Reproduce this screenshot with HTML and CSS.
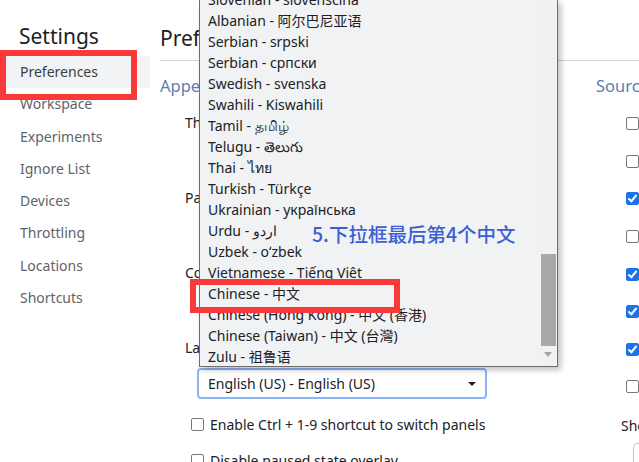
FILE: index.html
```html
<!DOCTYPE html>
<html>
<head>
    <title>Settings</title>
    <link rel="stylesheet" href="styles.css">
</head>
<body>
    <div class="settings">
        <div class="sidebar">
            <h1 class="sidebar-title">Settings</h1>
            <div class="nav-item active">Preferences</div>
            <div class="nav-item">Workspace</div>
            <div class="nav-item">Experiments</div>
            <div class="nav-item">Ignore List</div>
            <div class="nav-item">Devices</div>
            <div class="nav-item">Throttling</div>
            <div class="nav-item">Locations</div>
            <div class="nav-item">Shortcuts</div>
        </div>

        <div class="main">
            <h2 class="main-title">Preferences</h2>
            <div class="columns">
                <div class="col col-left">
                    <h3 class="section-title">Appearance</h3>

                    <div class="field">
                        <div class="field-label">Theme:</div>
                        <div class="select">System preference <span class="caret"></span></div>
                    </div>
                    <div class="field">
                        <div class="field-label">Panel layout:</div>
                        <div class="select">auto <span class="caret"></span></div>
                    </div>
                    <div class="field">
                        <div class="field-label">Color format:</div>
                        <div class="select">As authored <span class="caret"></span></div>
                    </div>
                    <div class="field">
                        <div class="field-label">Language:</div>
                        <div class="select focused">English (US) - English (US) <span class="caret"></span></div>
                    </div>

                    <div class="check-row"><span class="box"></span>Enable Ctrl + 1-9 shortcut to switch panels</div>
                    <div class="check-row"><span class="box"></span>Disable paused state overlay</div>
                </div>

                <div class="col col-right">
                    <h3 class="section-title">Sources</h3>
                    <div class="right-row"><span class="box"></span>Search in anonymous and content scripts</div>
                    <div class="right-row"><span class="box"></span>Automatically reveal files in sidebar</div>
                    <div class="right-row"><span class="box checked"></span>Enable JavaScript source maps</div>
                    <div class="right-row"><span class="box"></span>Enable tab moves focus</div>
                    <div class="right-row"><span class="box checked"></span>Detect indentation</div>
                    <div class="right-row"><span class="box checked"></span>Autocompletion</div>
                    <div class="right-row"><span class="box checked"></span>Bracket matching</div>
                    <div class="right-row"><span class="box"></span>Code folding</div>
                    <div class="right-label">Show whitespace characters:</div>
                    <div class="right-select"></div>
                </div>
            </div>
        </div>
    </div>

    <!-- open language dropdown -->
    <div class="dropdown">
        <div class="options">
            <div class="option">Slovenian - slovenščina</div>
            <div class="option">Albanian - 阿尔巴尼亚语</div>
            <div class="option">Serbian - srpski</div>
            <div class="option">Serbian - српски</div>
            <div class="option">Swedish - svenska</div>
            <div class="option">Swahili - Kiswahili</div>
            <div class="option">Tamil - தமிழ்</div>
            <div class="option">Telugu - తెలుగు</div>
            <div class="option">Thai - ไทย</div>
            <div class="option">Turkish - Türkçe</div>
            <div class="option">Ukrainian - українська</div>
            <div class="option">Urdu - اردو</div>
            <div class="option">Uzbek - oʻzbek</div>
            <div class="option">Vietnamese - Tiếng Việt</div>
            <div class="option">Chinese - 中文</div>
            <div class="option">Chinese (Hong Kong) - 中文 (香港)</div>
            <div class="option">Chinese (Taiwan) - 中文 (台灣)</div>
            <div class="option">Zulu - 祖鲁语</div>
        </div>
        <div class="scrollbar">
            <div class="thumb"></div>
            <div class="arrow-down"></div>
        </div>
        <div class="note">5.下拉框最后第4个中文</div>
    </div>

    <div class="mark mark-nav"></div>
    <div class="mark mark-option"></div>
</body>
</html>
```

FILE: styles.css
```css
body {
    margin: 0;
    font-family: "Noto Sans", "Noto Sans CJK SC", sans-serif;
    font-size: 14px;
    color: #202124;
    background: white;
    overflow: hidden;
}
.settings {
    display: flex;
    height: 462px;
    overflow: hidden;
}
.sidebar {
    width: 150px;
    flex-shrink: 0;
}
.sidebar-title {
    margin: 23px 0 7px 19px;
    font-size: 21px;
    font-weight: normal;
    line-height: 26px;
}
.nav-item {
    height: 32.3px;
    line-height: 32.3px;
    padding-left: 20px;
    color: #5f6368;
}
.nav-item.active {
    background: #f1f3f4;
    color: #3c4043;
}
.main {
    flex: 1;
    padding-left: 10px;
    min-width: 0;
}
.main-title {
    margin: 0;
    height: 61px;
    line-height: 76px;
    font-size: 21px;
    font-weight: normal;
    border-bottom: 1px solid #d3d3d3;
    box-sizing: border-box;
}
.columns {
    display: flex;
}
.col-left {
    width: 436px;
    flex-shrink: 0;
}
.col-right {
    flex: 1;
    white-space: nowrap;
}
.section-title {
    margin: 14px 0 0;
    font-size: 16.5px;
    font-weight: normal;
    line-height: 22px;
    color: #5e7eb0;
}
.field {
    padding-left: 25px;
    margin-top: 16px;
}
.field + .field {
    margin-top: 14px;
}
.field-label {
    line-height: 20px;
}
.select {
    position: relative;
    margin: 10px 0 0 15px;
    width: 287px;
    height: 31px;
    line-height: 29px;
    box-sizing: border-box;
    padding-left: 9px;
    border: 1px solid #c4c7c5;
    border-radius: 4px;
}
.select.focused {
    margin-left: 12px;
    width: 290px;
    border: 2px solid #8ab4f8;
    line-height: 27px;
}
.caret {
    position: absolute;
    right: 9px;
    top: 12px;
    border-left: 4px solid transparent;
    border-right: 4px solid transparent;
    border-top: 4px solid #202124;
}
.check-row {
    display: flex;
    align-items: center;
    height: 20px;
    margin-top: 15px;
    padding-left: 31px;
}
.check-row + .check-row {
    margin-top: 16px;
}
.box {
    width: 11px;
    height: 11px;
    border: 1px solid #767676;
    border-radius: 2px;
    margin-right: 6px;
    flex-shrink: 0;
    position: relative;
}
.box.checked {
    background: #1a73e8;
    border-color: #1a73e8;
}
.box.checked::after {
    content: "";
    position: absolute;
    left: 3px;
    top: 0px;
    width: 3px;
    height: 7px;
    border-right: 2px solid white;
    border-bottom: 2px solid white;
    transform: rotate(40deg);
}
.right-row {
    display: flex;
    align-items: center;
    height: 37.6px;
    padding-left: 30px;
}
.col-right .section-title + .right-row {
    margin-top: 8px;
}
.right-label {
    padding-left: 25px;
    line-height: 20px;
    margin-top: 10px;
}
.right-select {
    margin: 7px 0 0 37px;
    width: 200px;
    height: 30px;
    border: 1px solid #c4c7c5;
    border-radius: 4px;
}

/* open dropdown */
.dropdown {
    position: absolute;
    left: 199px;
    top: 0;
    width: 357px;
    height: 366px;
    background: #f1f2f4;
    border: 1px solid #6e6e6e;
    border-top: none;
    box-shadow: 3px 3px 6px rgba(0,0,0,0.25);
    overflow: hidden;
    display: flex;
}
.options {
    flex: 1;
    margin-top: -11px;
}
.option {
    height: 21px;
    line-height: 21px;
    padding-left: 8px;
    white-space: nowrap;
    color: #202124;
}
.scrollbar {
    width: 17px;
    background: #f1f1f1;
    position: relative;
}
.thumb {
    position: absolute;
    left: 1px;
    right: 1px;
    top: 254px;
    height: 92px;
    background: #a8a8a8;
}
.arrow-down {
    position: absolute;
    left: 4px;
    top: 352px;
    border-left: 4px solid transparent;
    border-right: 4px solid transparent;
    border-top: 5px solid #a3a3a3;
}
.note {
    position: absolute;
    left: 112px;
    top: 221px;
    font-family: "Noto Sans CJK SC", sans-serif;
    font-size: 19.5px;
    font-weight: 500;
    line-height: 26px;
    color: #3c5fd4;
}

/* red highlight boxes */
.mark {
    position: absolute;
    border: 6px solid #fa3a3a;
    box-sizing: border-box;
}
.mark-nav {
    left: 0;
    top: 50px;
    width: 137px;
    height: 50px;
}
.mark-option {
    left: 190px;
    top: 279px;
    width: 210px;
    height: 34px;
}
```
